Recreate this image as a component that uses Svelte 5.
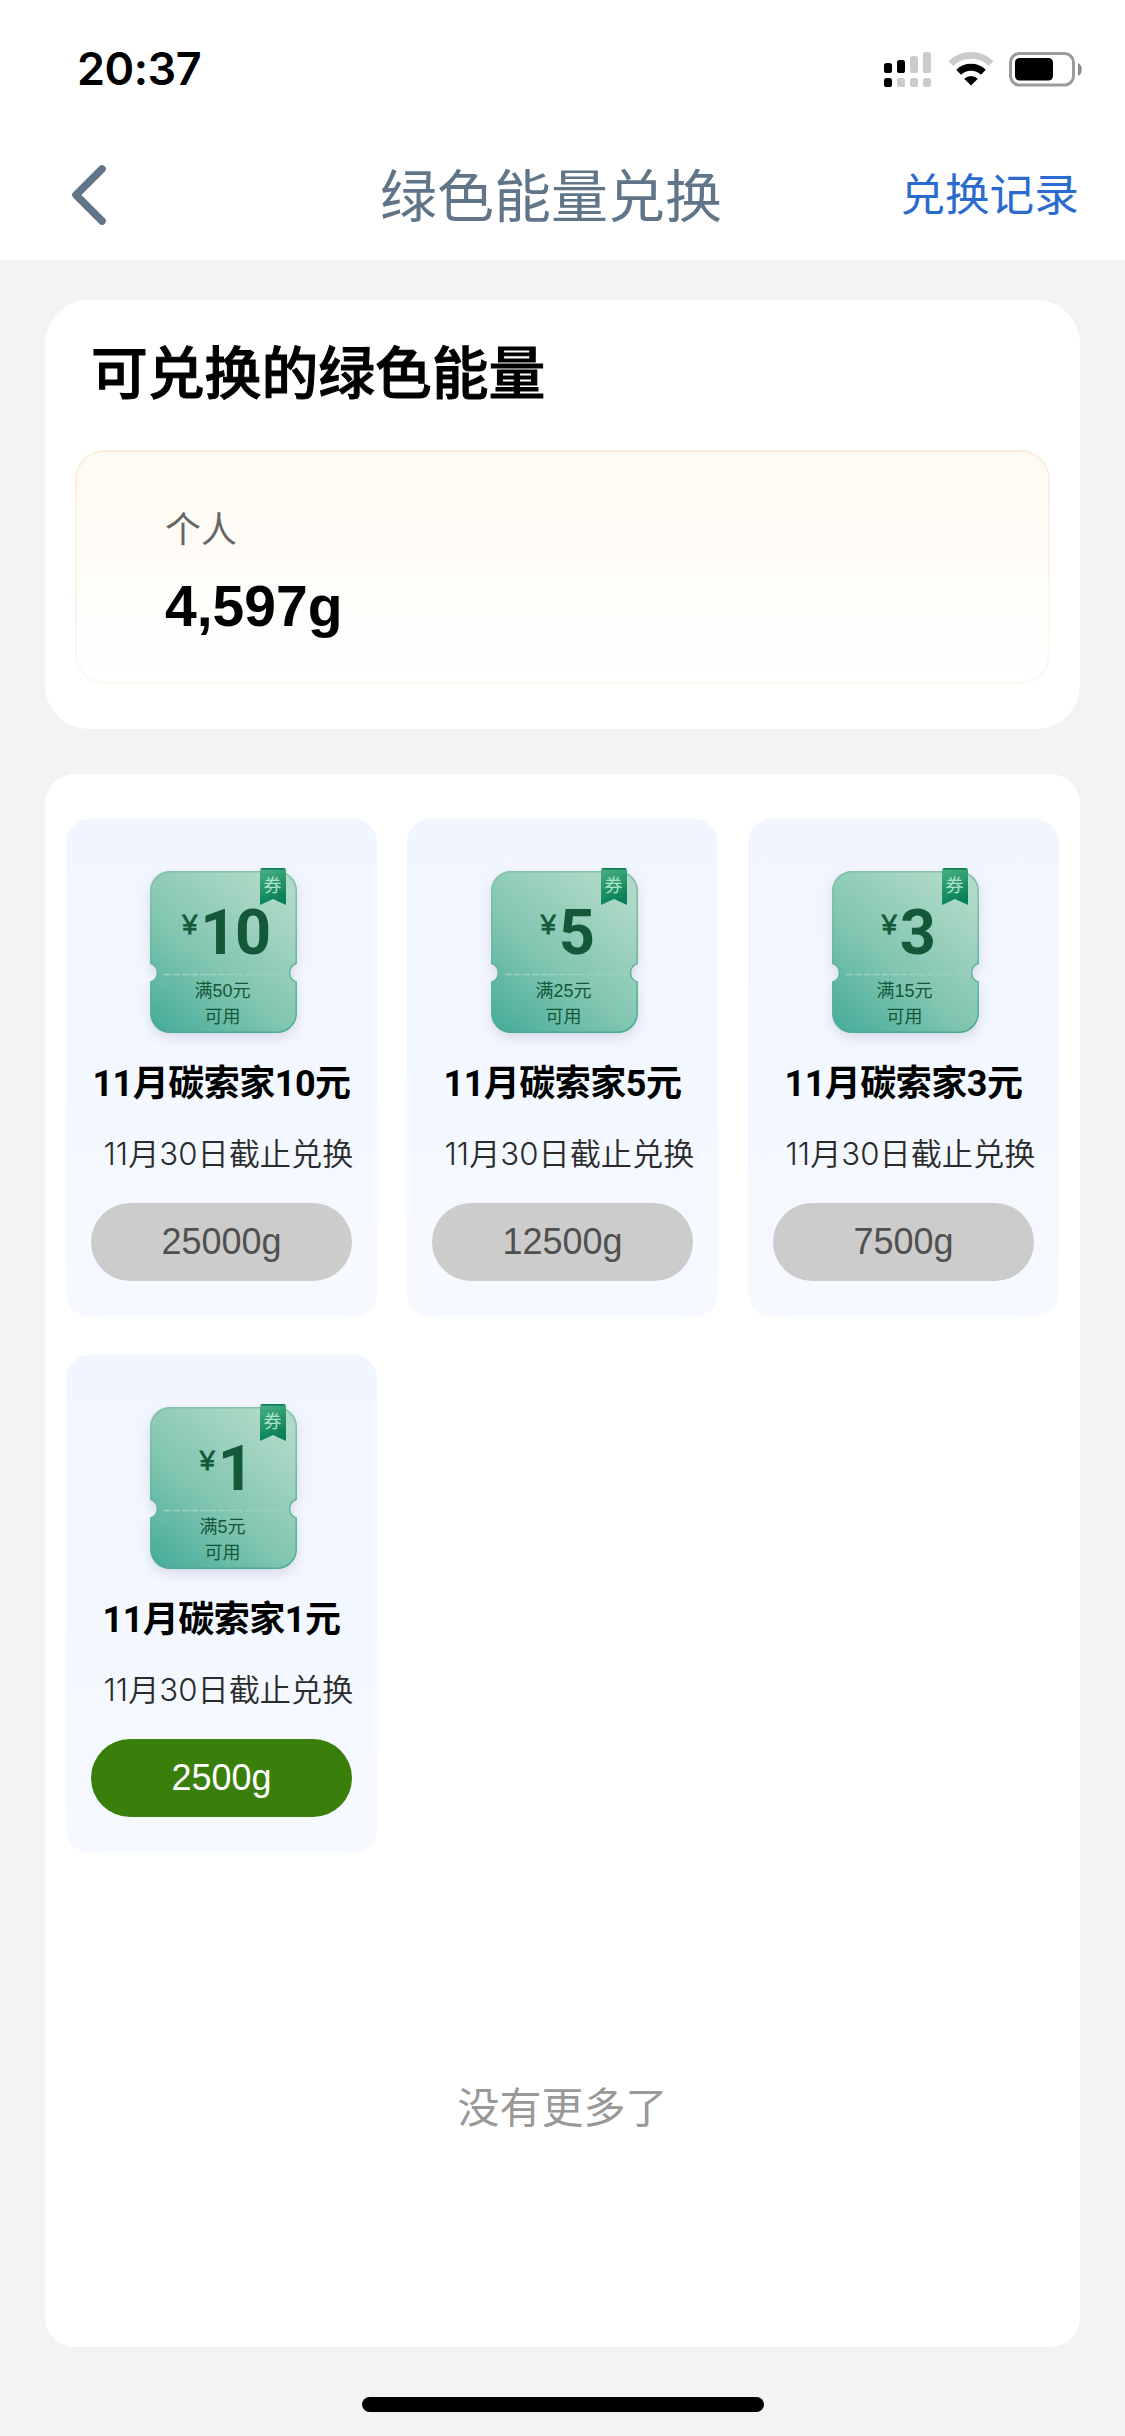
<script>
  const coupons = [
    { value: 10, min: 50, cost: 25000, active: false },
    { value: 5, min: 25, cost: 12500, active: false },
    { value: 3, min: 15, cost: 7500, active: false },
    { value: 1, min: 5, cost: 2500, active: true }
  ];
</script>

<div class="screen">
  <header>
    <div class="status">
      <span class="time">20:37</span>
      <div class="indicators">
        <svg class="signal" width="47" height="35" viewBox="0 0 47 35">
          <g fill="#000">
            <rect x="0" y="11" width="8" height="10" rx="2.6" />
            <rect x="13" y="8" width="8" height="13" rx="2.6" />
            <rect x="0" y="26" width="8" height="9" rx="2.6" />
          </g>
          <g fill="#cbcbcb">
            <rect x="26" y="4" width="8" height="17" rx="2.6" />
            <rect x="39" y="0" width="8" height="21" rx="2.6" />
            <rect x="13" y="26" width="8" height="9" rx="2.6" />
            <rect x="26" y="26" width="8" height="9" rx="2.6" />
            <rect x="39" y="26" width="8" height="9" rx="2.6" />
          </g>
        </svg>
        <svg class="wifi" width="46" height="35" viewBox="0 0 46 35">
          <path d="M2.8 11.6 A29 29 0 0 1 43.2 11.6" fill="none" stroke="#cbcbcb" stroke-width="6.6" />
          <path d="M10.6 20.2 A18 18 0 0 1 35.4 20.2" fill="none" stroke="#000" stroke-width="7" />
          <path d="M23 33.6 L16.2 26.8 A9.6 9.6 0 0 1 29.8 26.8 Z" fill="#000" />
        </svg>
        <svg class="battery" width="74" height="35" viewBox="0 0 74 35">
          <rect x="1.5" y="1.5" width="63" height="31.5" rx="9" fill="none" stroke="#9b9b9b" stroke-width="3" />
          <rect x="6" y="6" width="38" height="22.5" rx="4.5" fill="#000" />
          <path d="M69 11 C74 13 74 22 69 24 Z" fill="#8c8c8c" />
        </svg>
      </div>
    </div>
    <nav>
      <svg class="back" width="36" height="60" viewBox="0 0 36 60">
        <path d="M31 4 L5 30 L31 56" fill="none" stroke="#607688" stroke-width="7.6" stroke-linecap="round" stroke-linejoin="round" />
      </svg>
      <h1>绿色能量兑换</h1>
      <a class="log" href="#log">兑换记录</a>
    </nav>
  </header>

  <main>
    <section class="balance">
      <h2>可兑换的绿色能量</h2>
      <div class="account">
        <span class="who">个人</span>
        <strong>4,597g</strong>
      </div>
    </section>

    <section class="list">
      <div class="grid">
        {#each coupons as c}
          <article>
            <div class="ticket">
              <svg class="paper" width="147" height="162" viewBox="0 0 147 162">
                <defs>
                  <linearGradient id="tk{c.value}" x1="0" y1="1" x2="0.75" y2="0">
                    <stop offset="0" stop-color="#43ab98" />
                    <stop offset="0.45" stop-color="#7fc5b0" />
                    <stop offset="1" stop-color="#b0dac8" />
                  </linearGradient>
                  <linearGradient id="ed{c.value}" x1="0" y1="0" x2="0" y2="1">
                    <stop offset="0" stop-color="#84c0a4" />
                    <stop offset="1" stop-color="#4bab90" />
                  </linearGradient>
                </defs>
                <path
                  d="M20 .8 H127 A19 19 0 0 1 146.2 20 V92.5 A9.8 9.8 0 0 0 146.2 111 V142 A19 19 0 0 1 127 161.2 H20 A19 19 0 0 1 .8 142 V111 A9.8 9.8 0 0 0 .8 92.5 V20 A19 19 0 0 1 20 .8 Z"
                  fill="url(#tk{c.value})"
                  stroke="url(#ed{c.value})"
                  stroke-width="1.5"
                />
                <path d="M14 103.5 H137" stroke="#9bd2c3" stroke-width="1.6" stroke-dasharray="7 2" />
              </svg>
              <div class="ribbon">
                <svg width="26" height="37" viewBox="0 0 26 37">
                  <defs>
                    <linearGradient id="rb{c.value}" x1="0" y1="0" x2="0.3" y2="1">
                      <stop offset="0" stop-color="#4cb283" />
                      <stop offset="1" stop-color="#077f58" />
                    </linearGradient>
                  </defs>
                  <path d="M2 0 H24 Q26 0 26 3 V37 L13 31 L0 37 V3 Q0 0 2 0 Z" fill="url(#rb{c.value})" />
                  <path d="M1.5 .8 H24.5" stroke="#0b7d54" stroke-width="1.6" />
                </svg>
                <span>券</span>
              </div>
              <div class="amount"><i>¥</i><b>{c.value}</b></div>
              <p>满{c.min}元<br />可用</p>
            </div>
            <h3>11月碳索家{c.value}元</h3>
            <div class="deadline">11月30日截止兑换</div>
            <button class:active={c.active}>{c.cost}g</button>
          </article>
        {/each}
      </div>
      <div class="end">没有更多了</div>
    </section>
  </main>
  <footer><span class="home"></span></footer>
</div>

<style>
  :global(body) {
    margin: 0;
    background: #f3f3f3;
  }
  .screen {
    width: 1125px;
    height: 2436px;
    display: flex;
    flex-direction: column;
    overflow: hidden;
    background: #f3f3f3;
    font-family: 'Liberation Sans', 'Noto Sans CJK SC', sans-serif;
    color: #000;
  }
  h1, h2, h3, p {
    margin: 0;
  }
  header {
    height: 260px;
    background: #fff;
  }
  .status {
    height: 132px;
    display: flex;
    align-items: center;
    justify-content: space-between;
    padding: 6px 42px 0 77px;
    box-sizing: border-box;
  }
  .time {
    font: 600 45px/56px Inter, sans-serif;
    letter-spacing: -0.5px;
  }
  .indicators {
    display: flex;
    align-items: center;
  }
  .wifi {
    margin-left: 17px;
  }
  .battery {
    margin-left: 15px;
  }
  nav {
    height: 126px;
    display: grid;
    grid-template-columns: 310px 482px 1fr;
    align-items: center;
    padding: 0 46px 0 0;
  }
  .back {
    margin-left: 71px;
  }
  h1 {
    padding-top: 3px;
    font-size: 57px;
    line-height: 80px;
    font-weight: 400;
    text-align: center;
    color: #607688;
  }
  .log {
    padding-top: 2px;
    font-size: 44.7px;
    line-height: 60px;
    text-align: right;
    text-decoration: none;
    color: #2b6bcf;
  }
  main {
    display: flex;
    flex-direction: column;
    gap: 45px;
    padding: 40px 45px 0;
  }
  .balance {
    height: 429px;
    box-sizing: border-box;
    padding: 35px 30px 45px;
    border-radius: 44px;
    background: #fff;
  }
  h2 {
    height: 80px;
    margin: 0 0 35px 16px;
    font-size: 56.8px;
    line-height: 80px;
    font-weight: 500;
    -webkit-text-stroke: 1px #000;
  }
  .account {
    height: 234px;
    box-sizing: border-box;
    display: flex;
    flex-direction: column;
    padding: 54px 88px 0;
    border: 2px solid transparent;
    border-radius: 30px;
    background:
      linear-gradient(#fffaf2, #fff) padding-box,
      linear-gradient(#fbeedd, #fdf9f0) border-box;
  }
  .who {
    font-size: 36px;
    line-height: 50px;
    color: #666;
  }
  strong {
    font-size: 57px;
    line-height: 68px;
    margin-top: 16px;
  }
  .list {
    height: 1573px;
    box-sizing: border-box;
    padding: 45px 21px 0;
    border-radius: 30px;
    background: #fff;
  }
  .grid {
    display: grid;
    grid-template-columns: repeat(3, 311px);
    gap: 38px 30px;
  }
  article {
    height: 498px;
    display: flex;
    flex-direction: column;
    align-items: center;
    border-radius: 24px;
    background: linear-gradient(#f0f5ff, #f6f9ff);
  }
  .ticket {
    position: relative;
    width: 147px;
    height: 162px;
    margin: 52px 0 0 3px;
    color: #14583a;
    text-align: center;
  }
  .paper {
    position: absolute;
    inset: 0;
    filter: drop-shadow(0 5px 6px rgba(70, 70, 110, 0.15));
  }
  .ribbon {
    position: absolute;
    top: -3px;
    left: 110px;
    width: 26px;
    height: 37px;
  }
  .ribbon span {
    position: absolute;
    inset: 8px 0 auto;
    font-size: 18px;
    line-height: 20px;
    color: #ace2c8;
  }
  .amount {
    position: relative;
    height: 108px;
    display: flex;
    justify-content: center;
    align-items: flex-start;
    gap: 3px;
    padding-top: 24px;
    box-sizing: border-box;
    margin-left: 6px;
  }
  .amount i {
    font: 500 27px/60px 'Liberation Sans', sans-serif;
    -webkit-text-stroke: 0.8px #14583a;
  }
  .amount b {
    font: 700 63px/75px Roboto, sans-serif;
    letter-spacing: -1.5px;
  }
  .ticket p {
    position: relative;
    font-size: 18px;
    line-height: 26px;
    margin: -1px 0 0 -1px;
  }
  h3 {
    height: 54px;
    margin-top: 24px;
    font: 700 36px/54px Roboto, 'Noto Sans CJK SC', sans-serif;
    letter-spacing: -0.5px;
    white-space: nowrap;
  }
  .deadline {
    height: 44px;
    margin: 21px 0 0 14px;
    font: 350 31.2px/44px Inter, 'Noto Sans CJK SC', sans-serif;
    color: #2b2b2b;
    white-space: nowrap;
  }
  button {
    width: 261px;
    height: 78px;
    margin-top: 27px;
    padding: 0;
    border: 0;
    border-radius: 39px;
    background: #ccc;
    color: #505050;
    font: 36px/78px 'Liberation Sans', sans-serif;
  }
  button.active {
    background: #3a7f0b;
    color: #fff;
  }
  .end {
    margin-top: 226px;
    font-size: 42px;
    line-height: 60px;
    text-align: center;
    color: #999;
  }
  footer {
    display: flex;
    justify-content: center;
    padding-top: 50px;
  }
  .home {
    width: 402px;
    height: 15px;
    border-radius: 8px;
    background: #000;
  }
</style>
